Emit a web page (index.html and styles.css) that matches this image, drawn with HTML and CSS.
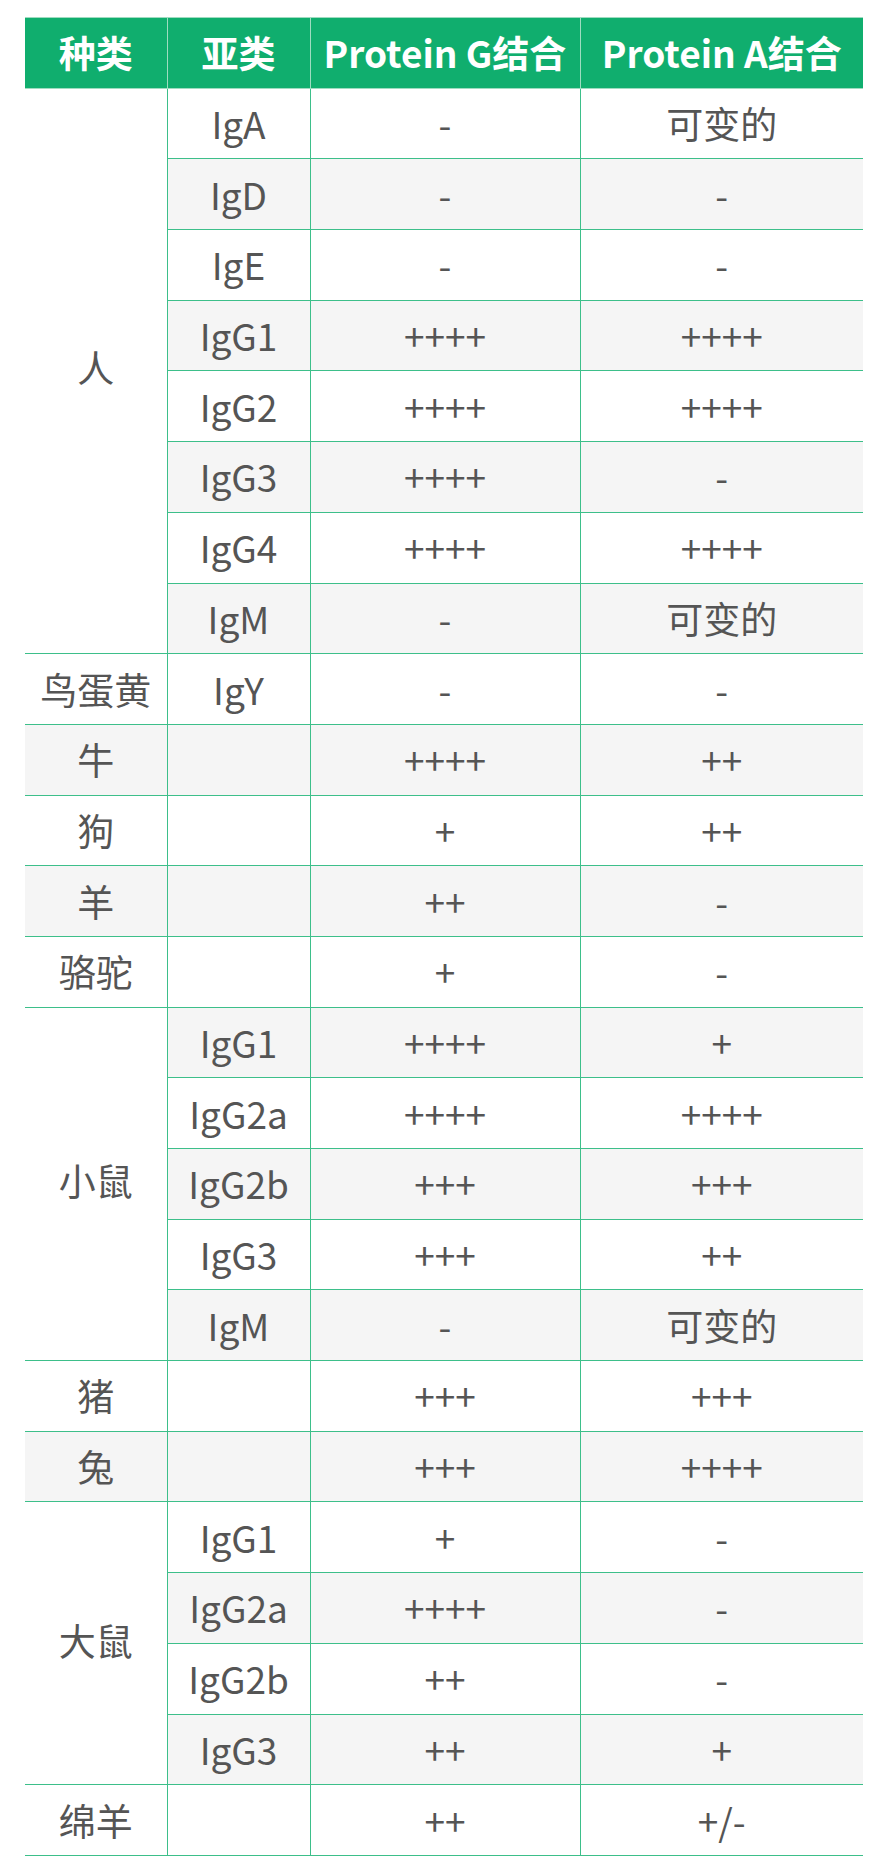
FILE: index.html
```html
<!DOCTYPE html>
<html lang="zh-CN">
<head>
<meta charset="utf-8">
<title>Protein G / Protein A 结合</title>
<link rel="stylesheet" href="styles.css">
</head>
<body>
<table class="bind">
  <colgroup>
    <col class="c1"><col class="c2"><col class="c3"><col class="c4">
  </colgroup>
  <thead>
    <tr><th>种类</th><th>亚类</th><th>Protein G结合</th><th>Protein A结合</th></tr>
  </thead>
  <tbody>
    <tr><td rowspan="8" class="sp">人</td><td>IgA</td><td>-</td><td>可变的</td></tr>
    <tr><td>IgD</td><td>-</td><td>-</td></tr>
    <tr><td>IgE</td><td>-</td><td>-</td></tr>
    <tr><td>IgG1</td><td>++++</td><td>++++</td></tr>
    <tr><td>IgG2</td><td>++++</td><td>++++</td></tr>
    <tr><td>IgG3</td><td>++++</td><td>-</td></tr>
    <tr><td>IgG4</td><td>++++</td><td>++++</td></tr>
    <tr><td>IgM</td><td>-</td><td>可变的</td></tr>
    <tr><td>鸟蛋黄</td><td>IgY</td><td>-</td><td>-</td></tr>
    <tr><td>牛</td><td></td><td>++++</td><td>++</td></tr>
    <tr><td>狗</td><td></td><td>+</td><td>++</td></tr>
    <tr><td>羊</td><td></td><td>++</td><td>-</td></tr>
    <tr><td>骆驼</td><td></td><td>+</td><td>-</td></tr>
    <tr><td rowspan="5" class="sp">小鼠</td><td>IgG1</td><td>++++</td><td>+</td></tr>
    <tr><td>IgG2a</td><td>++++</td><td>++++</td></tr>
    <tr><td>IgG2b</td><td>+++</td><td>+++</td></tr>
    <tr><td>IgG3</td><td>+++</td><td>++</td></tr>
    <tr><td>IgM</td><td>-</td><td>可变的</td></tr>
    <tr><td>猪</td><td></td><td>+++</td><td>+++</td></tr>
    <tr><td>兔</td><td></td><td>+++</td><td>++++</td></tr>
    <tr><td rowspan="4" class="sp">大鼠</td><td>IgG1</td><td>+</td><td>-</td></tr>
    <tr><td>IgG2a</td><td>++++</td><td>-</td></tr>
    <tr><td>IgG2b</td><td>++</td><td>-</td></tr>
    <tr><td>IgG3</td><td>++</td><td>+</td></tr>
    <tr><td>绵羊</td><td></td><td>++</td><td>+/-</td></tr>
  </tbody>
</table>
</body>
</html>
```

FILE: styles.css
```css
html, body {
  margin: 0;
  padding: 0;
  background: #ffffff;
}

body {
  font-family: "Noto Sans CJK SC", "Noto Sans", sans-serif;
  color: #555555;
}

.bind {
  margin: 17px 0 0 25px;
  width: 838px;
  border-collapse: collapse;
  table-layout: fixed;
  border-left: hidden;
  border-right: hidden;
}

.c1 { width: 142px; }
.c2 { width: 143px; }
.c3 { width: 270px; }
.c4 { width: 283px; }

.bind tr {
  height: 70.7px;
}

.bind th,
.bind td {
  padding: 0;
  text-align: center;
  vertical-align: middle;
  line-height: 1;
}

.bind th {
  background: #10ae6e;
  color: #ffffff;
  font-weight: 700;
  font-size: 37px;
  border: 1px solid #9fdcc0;
}

.bind td {
  font-size: 37px;
  font-weight: 400;
  border: 1px solid #3dbf8a;
}

.bind tbody tr:nth-child(even) td {
  background: #f5f5f5;
}

.bind tbody tr td.sp {
  background: #ffffff;
  padding-bottom: 6px;
}
```
